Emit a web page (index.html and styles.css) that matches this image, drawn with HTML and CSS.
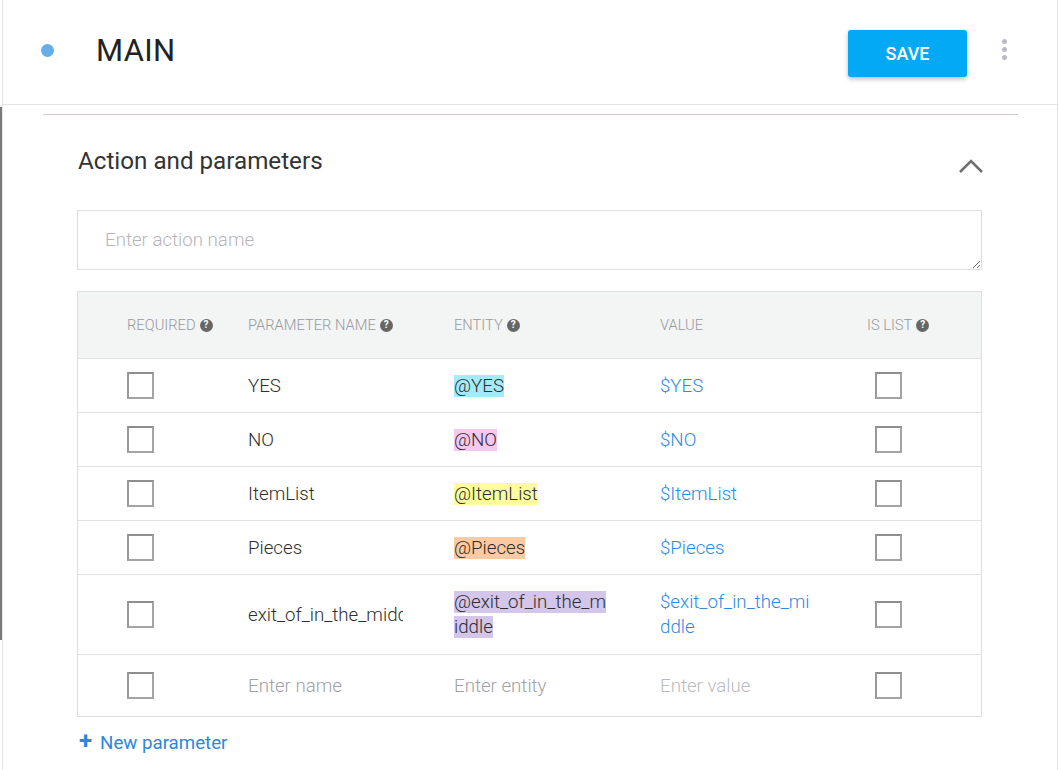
FILE: index.html
```html
<!DOCTYPE html>
<html>
<head>
<meta charset="utf-8">
<link rel="stylesheet" href="styles.css">
</head>
<body>
<div class="app">
  <div class="rail"><div class="rail-gap"></div><div class="rail-bar"></div></div>
  <div class="panel">
    <header class="topbar">
      <span class="dot"></span>
      <h1 class="title">MAIN</h1>
      <button class="save">SAVE</button>
      <span class="kebab"><i></i><i></i><i></i></span>
    </header>
    <div class="content">
      <div class="divider"></div>
      <section class="section">
        <div class="section-head">
          <h2 class="section-title">Action and parameters</h2>
          <svg class="chevron" width="26" height="16" viewBox="0 0 26 16"><polyline points="2,14 13,3 24,14" fill="none" stroke="#6f6f6f" stroke-width="2.6"/></svg>
        </div>
        <textarea class="action-input" placeholder="Enter action name"></textarea>
        <div class="table">
          <div class="row head">
            <div class="cell c1">REQUIRED<span class="q">?</span></div>
            <div class="cell">PARAMETER NAME<span class="q">?</span></div>
            <div class="cell">ENTITY<span class="q">?</span></div>
            <div class="cell">VALUE</div>
            <div class="cell">IS LIST<span class="q">?</span></div>
          </div>
          <div class="row">
            <div class="cell c1"><span class="box"></span></div>
            <div class="cell name">YES</div>
            <div class="cell"><span class="ent e-cyan">@YES</span></div>
            <div class="cell val">$YES</div>
            <div class="cell c5"><span class="box"></span></div>
          </div>
          <div class="row">
            <div class="cell c1"><span class="box"></span></div>
            <div class="cell name">NO</div>
            <div class="cell"><span class="ent e-pink">@NO</span></div>
            <div class="cell val">$NO</div>
            <div class="cell c5"><span class="box"></span></div>
          </div>
          <div class="row">
            <div class="cell c1"><span class="box"></span></div>
            <div class="cell name">ItemList</div>
            <div class="cell"><span class="ent e-yellow">@ItemList</span></div>
            <div class="cell val">$ItemList</div>
            <div class="cell c5"><span class="box"></span></div>
          </div>
          <div class="row">
            <div class="cell c1"><span class="box"></span></div>
            <div class="cell name">Pieces</div>
            <div class="cell"><span class="ent e-orange">@Pieces</span></div>
            <div class="cell val">$Pieces</div>
            <div class="cell c5"><span class="box"></span></div>
          </div>
          <div class="row tall">
            <div class="cell c1"><span class="box"></span></div>
            <div class="cell name"><span class="clip">exit_of_in_the_middle</span></div>
            <div class="cell wrap"><span class="ent e-purple">@exit_of_in_the_middle</span></div>
            <div class="cell val wrap">$exit_of_in_the_middle</div>
            <div class="cell c5"><span class="box"></span></div>
          </div>
          <div class="row last">
            <div class="cell c1"><span class="box"></span></div>
            <div class="cell ph">Enter name</div>
            <div class="cell ph">Enter entity</div>
            <div class="cell ph light">Enter value</div>
            <div class="cell c5"><span class="box"></span></div>
          </div>
        </div>
        <div class="add"><span class="plus">+</span>New parameter</div>
      </section>
    </div>
  </div>
</div>
</body>
</html>
```

FILE: styles.css
```css
* { box-sizing: border-box; }
html, body { margin: 0; padding: 0; background: #fff; }
body { font-family: Roboto, "Noto Sans", Arial, sans-serif; color: #333; }

.app { display: flex; width: 1058px; height: 770px; overflow: hidden; }
.rail { width: 2px; flex-shrink: 0; display: flex; flex-direction: column; }
.rail-gap { height: 107px; }
.rail-bar { height: 533px; background: #7a7a7a; }

.panel { flex: 1; border-left: 1px solid #e4e4e4; border-right: 1px solid #e4e4e4; }

.topbar { height: 105px; border-bottom: 1px solid #e6e6e6; display: flex; align-items: center; padding-left: 38px; }
.dot { width: 13px; height: 13px; border-radius: 50%; background: #64aeea; margin-top: -4px; }
.title { margin: 0 0 0 42px; font-size: 31px; font-weight: 400; color: #222; letter-spacing: 0.3px; flex: 1; margin-top: -4px; }
.save { width: 119px; height: 47px; border: none; border-radius: 3px; background: #03a9f4; color: #fff; font-family: Roboto, sans-serif; font-size: 18px; font-weight: 500; box-shadow: 0 2px 5px rgba(0,0,0,0.28); margin-top: 3px; margin-left: -1px; }
.kebab { display: flex; flex-direction: column; gap: 3px; margin: -5px 50px 0 35px; }
.kebab i { width: 5px; height: 5px; border-radius: 50%; background: #b9bcc2; display: block; }

.content { padding: 9px 39px 0 40px; }
.divider { height: 1px; background: #d2cccf; }
.section { padding: 0 36px 0 34px; }
.section-head { display: flex; align-items: center; justify-content: space-between; margin-top: 31px; height: 30px; }
.section-title { margin: 0 0 0 1px; font-size: 24.2px; font-weight: 400; color: #333; line-height: 30px; }
.chevron { margin-top: 10px; margin-right: -2px; }

.action-input { display: block; width: 100%; height: 60px; margin-top: 34px; border: 1px solid #dedede; padding: 18px 27px; font-family: Roboto, sans-serif; font-size: 18.7px; font-weight: 300; color: #333; resize: vertical; outline: none; border-radius: 0; }
.action-input::placeholder { color: #b5b5ba; }

.table { margin-top: 21px; border: 1px solid #dedede; }
.row { display: grid; grid-template-columns: 170px 206px 206px 207px 1fr; height: 54px; border-top: 1px solid #e2e2e2; align-items: center; font-size: 18.7px; font-weight: 300; }
.row.head { border-top: none; height: 66px; background: #f3f4f4; font-size: 14.7px; color: #979aa0; }
.row.tall { height: 80px; }
.row.last { height: 62px; }
.cell { display: flex; align-items: center; min-width: 0; }
.c1 { padding-left: 49px; }
.c5 { padding-left: 8px; }
.head .cell:last-child { padding-left: 0; }
.q { display: inline-flex; width: 13px; height: 13px; border-radius: 50%; background: #666; color: #fff; font-size: 10px; font-weight: 700; align-items: center; justify-content: center; margin-left: 4px; line-height: 1; }
.box { width: 27px; height: 27px; border: 2px solid #a3a3a3; border-top-color: #8e8e8e; border-left-color: #999; display: block; }
.name { color: #2e2e2e; }
.clip { display: block; width: 155px; overflow: hidden; white-space: nowrap; }
.ent { color: #2e2e2e; }
.wrap { display: block; width: 156px; word-break: break-all; line-height: 25px; }
.e-cyan { background: #a3ebfa; }
.e-pink { background: #f6c8f1; }
.e-yellow { background: #fdfd9d; }
.e-orange { background: #fbc9a2; }
.e-purple { background: #d4c5ea; }
.val { color: #2d8ae4; }
.val.wrap { width: 156px; }
.ph { color: #a0a0a5; }
.ph.light { color: #babac0; }

.add { display: flex; align-items: center; margin-top: 15px; margin-left: 2px; font-size: 18.7px; color: #2a88df; }
.plus { font-size: 24px; font-weight: 700; margin-right: 8px; line-height: 20px; margin-top: -4px; }
```
